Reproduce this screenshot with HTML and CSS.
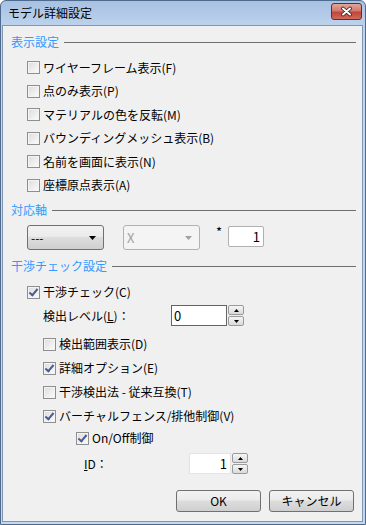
FILE: index.html
```html
<!DOCTYPE html>
<html lang="ja">
<head>
    <meta charset="UTF-8">
    <title>モデル詳細設定</title>
    <link rel="stylesheet" href="styles.css">
</head>
<body>
    <div class="window">
        <div class="titlebar">
            <span class="title">モデル詳細設定</span>
            <div class="close">
                <svg width="15" height="11" viewBox="0 0 15 11">
                    <path d="M4 2.5 L11 8.5 M11 2.5 L4 8.5" stroke="#3a2020" stroke-width="3.6" stroke-linecap="round"/>
                    <path d="M4 2.5 L11 8.5 M11 2.5 L4 8.5" stroke="#fff" stroke-width="2" stroke-linecap="round"/>
                </svg>
            </div>
        </div>

        <div class="client">
            <!-- 表示設定 -->
            <div class="group-head"><span>表示設定</span><i></i></div>
            <div class="list level1">
                <label class="row r23"><span class="cb"></span>ワイヤーフレーム表示(F)</label>
                <label class="row r24"><span class="cb"></span>点のみ表示(P)</label>
                <label class="row r23"><span class="cb"></span>マテリアルの色を反転(M)</label>
                <label class="row r24"><span class="cb"></span>バウンディングメッシュ表示(B)</label>
                <label class="row r23"><span class="cb"></span>名前を画面に表示(N)</label>
                <label class="row r24"><span class="cb"></span>座標原点表示(A)</label>
            </div>

            <!-- 対応軸 -->
            <div class="group-head head2"><span>対応軸</span><i></i></div>
            <div class="axis-row">
                <div class="combo">
                    <span>---</span>
                    <svg width="7" height="4" viewBox="0 0 7 4"><path d="M0 0 H7 L3.5 4 Z" fill="#000"/></svg>
                </div>
                <div class="combo disabled">
                    <span>X</span>
                    <svg width="7" height="4" viewBox="0 0 7 4"><path d="M0 0 H7 L3.5 4 Z" fill="#a0a0a0"/></svg>
                </div>
                <span class="star">*</span>
                <div class="textbox">1</div>
            </div>

            <!-- 干渉チェック設定 -->
            <div class="group-head head3"><span>干渉チェック設定</span><i></i></div>
            <div class="level1">
                <label class="row r22"><span class="cb checked"></span>干渉チェック(C)</label>
                <div class="level2">
                    <div class="spin-row level-row">
                        <span class="spin-label">検出レベル(<u>L</u>)：</span>
                        <div class="spin dark">
                            <div class="spin-input left">0</div>
                            <div class="spin-btns">
                                <div class="sbtn"><svg width="5" height="3" viewBox="0 0 5 3"><path d="M0 3 H5 L2.5 0 Z"/></svg></div>
                                <div class="sbtn"><svg width="5" height="3" viewBox="0 0 5 3"><path d="M0 0 H5 L2.5 3 Z"/></svg></div>
                            </div>
                        </div>
                    </div>
                    <label class="row r24 first"><span class="cb"></span>検出範囲表示(D)</label>
                    <label class="row r24"><span class="cb checked"></span>詳細オプション(E)</label>
                    <label class="row r24"><span class="cb"></span>干渉検出法 - 従来互換(T)</label>
                    <label class="row r24"><span class="cb checked"></span>バーチャルフェンス/排他制御(V)</label>
                    <div class="level3">
                        <label class="row r20"><span class="cb checked"></span>On/Off制御</label>
                        <div class="spin-row id-row">
                            <span class="spin-label id-label"><u>I</u>D：</span>
                            <div class="spin light">
                                <div class="spin-input right">1</div>
                                <div class="spin-btns">
                                    <div class="sbtn"><svg width="5" height="3" viewBox="0 0 5 3"><path d="M0 3 H5 L2.5 0 Z"/></svg></div>
                                    <div class="sbtn"><svg width="5" height="3" viewBox="0 0 5 3"><path d="M0 0 H5 L2.5 3 Z"/></svg></div>
                                </div>
                            </div>
                        </div>
                    </div>
                </div>
            </div>

            <div class="buttons">
                <button class="btn default">OK</button>
                <button class="btn">キャンセル</button>
            </div>
        </div>
    </div>
</body>
</html>
```

FILE: styles.css
```css
body {
    margin: 0;
    font-family: "Noto Sans CJK JP", "Noto Sans", sans-serif;
    font-size: 12px;
    color: #000;
    background: #fff;
}
.window {
    width: 366px;
    height: 525px;
    box-sizing: border-box;
    border: 1px solid #4f6a8f;
    border-radius: 6px 6px 0 0;
    background: linear-gradient(#a7c1e2 0, #bcd2ec 24px, #c3d8f0 60px, #c3d8f0 100%);
    display: flex;
    flex-direction: column;
}
.titlebar {
    height: 24px;
    display: flex;
    align-items: center;
    justify-content: space-between;
}
.title {
    padding-left: 7px;
    line-height: 16px;
}
.close {
    width: 31px;
    height: 17px;
    box-sizing: border-box;
    margin-right: 3px;
    margin-top: -4px;
    border: 1px solid #6b2a24;
    border-radius: 3px;
    background: linear-gradient(#e2a69c 0, #d47a6c 45%, #c0463a 55%, #cf6a5c 100%);
    display: flex;
    align-items: center;
    justify-content: center;
}
.client {
    flex: 1;
    margin: 0 2px 2px 1px;
    border: 1px solid #8196b3;
    background: #f0f0f0;
    padding: 8px 6px 0 8px;
    display: flex;
    flex-direction: column;
}
.group-head {
    height: 16px;
    display: flex;
    align-items: center;
    color: #3399ff;
    line-height: 16px;
}
.group-head i {
    flex: 1;
    height: 1px;
    margin-left: 5px;
    background: #6e6e6e;
}
.head2 {
    margin-top: 5px;
}
.head3 {
    margin-top: 8px;
}
.level1 {
    padding-left: 16px;
}
.list {
    margin-top: 6px;
}
.row {
    display: flex;
    align-items: center;
    line-height: 16px;
}
.r20 { height: 20px; }
.r22 { height: 22px; margin-top: 7px; }
.r23 { height: 23px; }
.r24 { height: 24px; }
.cb {
    width: 13px;
    height: 13px;
    box-sizing: border-box;
    margin-right: 3px;
    border: 1px solid #8f8f8f;
    background: linear-gradient(135deg, #dcdcdc, #fcfcfc);
    box-shadow: inset 0 0 0 1px #f4f4f4;
    position: relative;
}
.cb.checked::after {
    content: "";
    position: absolute;
    left: 3px;
    top: 0px;
    width: 3px;
    height: 7px;
    border: solid #4a5c94;
    border-width: 0 2px 2px 0;
    transform: rotate(40deg);
}
.axis-row {
    display: flex;
    align-items: flex-start;
    margin-top: 7px;
    padding-left: 16px;
    height: 25px;
}
.combo {
    width: 77px;
    height: 25px;
    box-sizing: border-box;
    border: 1px solid #707070;
    border-radius: 3px;
    background: linear-gradient(#f2f2f2 0, #ebebeb 45%, #dddddd 50%, #cfcfcf 100%);
    display: flex;
    align-items: center;
    justify-content: space-between;
    padding: 0 7px 0 3px;
    line-height: 16px;
}
.combo.disabled {
    margin-left: 19px;
    border-color: #adb2b5;
    background: #f4f4f4;
    color: #a0a0a0;
    font-size: 13px;
}
.star {
    margin-left: 16px;
    margin-top: 1px;
    line-height: 12px;
    font-size: 13px;
}
.textbox {
    margin-left: 6px;
    margin-top: 1px;
    width: 36px;
    height: 21px;
    box-sizing: border-box;
    border: 1px solid #b0b0b0;
    border-radius: 2px;
    background: #fff;
    text-align: right;
    padding-right: 3px;
    line-height: 19px;
    font-size: 13px;
}
.level2 {
    padding-left: 16px;
}
.spin-row {
    display: flex;
    align-items: center;
    height: 23px;
}
.level-row {
    margin-top: 1px;
}
.spin-label {
    width: 128px;
    line-height: 16px;
}
.spin {
    display: flex;
}
.spin-input {
    width: 56px;
    height: 21px;
    box-sizing: border-box;
    background: #fff;
    line-height: 19px;
    font-size: 13px;
}
.spin.dark .spin-input {
    border: 1px solid #646464;
    padding-left: 2px;
}
.spin.light .spin-input {
    width: 42px;
    border: 1px solid #e4e4e4;
    text-align: right;
    padding-right: 3px;
}
.spin-btns {
    display: flex;
    flex-direction: column;
    justify-content: space-between;
    height: 21px;
    margin-left: 1px;
}
.sbtn {
    width: 16px;
    height: 10px;
    box-sizing: border-box;
    border: 1px solid #9a9a9a;
    border-radius: 2px;
    background: linear-gradient(#f6f6f6, #dadada);
    display: flex;
    align-items: center;
    justify-content: center;
}
.sbtn svg {
    fill: #000;
}
.first {
    margin-top: 5px;
}
.level3 {
    padding-left: 33px;
}
.id-row {
    height: 21px;
    margin-top: 5px;
    padding-left: 8px;
}
.id-label {
    width: 105px;
}
.buttons {
    display: flex;
    justify-content: flex-end;
    gap: 8px;
    margin-top: 16px;
    padding-right: 2px;
}
.btn {
    width: 85px;
    height: 22px;
    box-sizing: border-box;
    border: 1px solid #707070;
    border-radius: 3px;
    background: linear-gradient(#f2f2f2 0, #ebebeb 45%, #dddddd 50%, #cfcfcf 100%);
    font-family: "Noto Sans CJK JP", "Noto Sans", sans-serif;
    font-size: 12px;
    line-height: 16px;
    padding: 0;
    color: #000;
}
```
